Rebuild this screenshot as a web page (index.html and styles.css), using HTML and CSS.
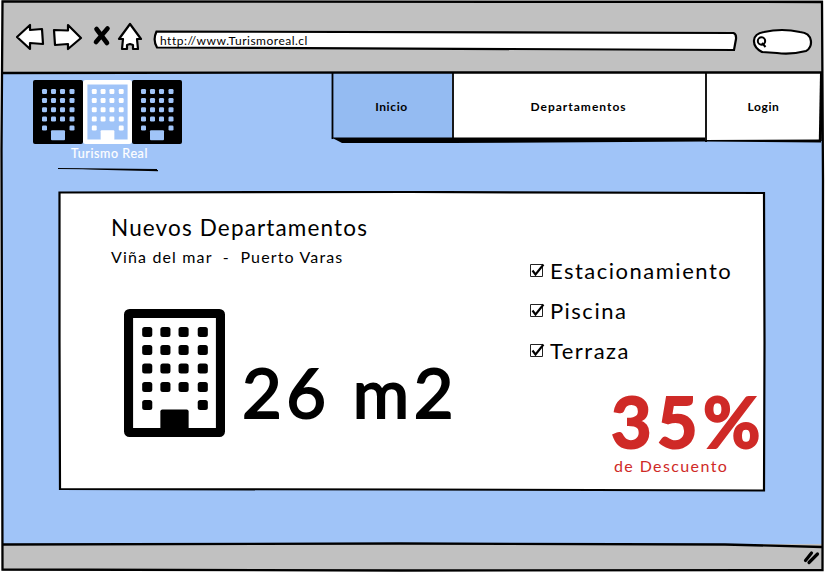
FILE: index.html
```
<!DOCTYPE html>
<html lang="es">
<head>
<meta charset="utf-8">
<title>Turismo Real</title>
<link rel="stylesheet" href="styles.css">
</head>
<body>
<svg class="symbols" aria-hidden="true">
  <symbol id="windows" viewBox="0 0 100 128">
    <g fill="currentColor">
      <rect x="18" y="18" width="10" height="10" rx="2.5"/><rect x="36" y="18" width="10" height="10" rx="2.5"/><rect x="54" y="18" width="10" height="10" rx="2.5"/><rect x="73" y="18" width="10" height="10" rx="2.5"/>
      <rect x="18" y="36" width="10" height="10" rx="2.5"/><rect x="36" y="36" width="10" height="10" rx="2.5"/><rect x="54" y="36" width="10" height="10" rx="2.5"/><rect x="73" y="36" width="10" height="10" rx="2.5"/>
      <rect x="18" y="54.500" width="10" height="10" rx="2.5"/><rect x="36" y="54.500" width="10" height="10" rx="2.5"/><rect x="54" y="54.500" width="10" height="10" rx="2.5"/><rect x="73" y="54.500" width="10" height="10" rx="2.5"/>
      <rect x="18" y="73" width="10" height="10" rx="2.5"/><rect x="36" y="73" width="10" height="10" rx="2.5"/><rect x="54" y="73" width="10" height="10" rx="2.5"/><rect x="73" y="73" width="10" height="10" rx="2.5"/>
      <rect x="18" y="91" width="10" height="10" rx="2.5"/><rect x="73" y="91" width="10" height="10" rx="2.5"/>
      <rect x="36" y="100.500" width="28" height="20" rx="2"/>
    </g>
  </symbol>
  <symbol id="building" viewBox="0 0 100 128">
    <rect x="4.500" y="4.500" width="91" height="119" rx="1" fill="none" stroke="currentColor" stroke-width="9" stroke-linejoin="round"/>
    <use href="#windows" width="100" height="128"/>
  </symbol>
  <symbol id="check" viewBox="0 0 16 16">
    <path d="M1.500 2.500h12v12h-12z" fill="#fff" stroke="#222" stroke-width="1"/>
    <path d="M3.500 8.500l3 4L14.500 2.500" fill="none" stroke="#000" stroke-width="2.100"/>
  </symbol>
</svg>

<div class="window">
  <header class="toolbar">
    <svg class="nav-icons" width="130" height="32" viewBox="0 0 130 32">
      <g fill="#fff" stroke="#000" stroke-width="2.200" stroke-linejoin="round">
        <path d="M1 17L14 5v5l12-1 1 15-13-1v6z"/>
        <path d="M38 10l14 .5V5l13 13-13 11v-5l-13 1z"/>
        <path d="M114 4l11 15h-4l1 10h-5v-4l-3-1-3 1v4h-5l1-10h-4z"/>
      </g>
      <path d="M80.500 9l10.500 14M91.500 8.500L80 22" stroke="#000" stroke-width="4.600" stroke-linecap="round"/>
    </svg>
    <div class="address">
      <svg class="outline" viewBox="0 0 586 24"><path d="M3.500 1.500l577 1.500q3 1 2.500 6l-2 11-577-2.500Q-.5 10 3.500 1.500z" fill="#fff" stroke="#000" stroke-width="2.200"/></svg>
      <span class="url">http://www.Turismoreal.cl</span>
    </div>
    <svg class="search" width="62" height="27" viewBox="0 0 62 27">
      <path d="M12 4Q30 0 48 4C62 5 61 20 54 23Q38 27 25 25L10 24C-1 18-1 6 12 4z" fill="#fff" stroke="#000" stroke-width="2.200"/>
      <circle cx="9.500" cy="13" r="3.700" fill="none" stroke="#000" stroke-width="2"/><path d="M10 15l3.500 4" stroke="#000" stroke-width="2"/>
    </svg>
  </header>

  <main class="page">
    <div class="masthead">
      <div class="brand">
        <div class="buildings">
          <svg class="block dark" viewBox="0 0 100 128" preserveAspectRatio="none"><use href="#windows" width="100" height="128"/></svg>
          <svg class="block light" viewBox="0 0 100 128" preserveAspectRatio="none"><use href="#building" width="100" height="128"/></svg>
          <svg class="block dark" viewBox="0 0 100 128" preserveAspectRatio="none"><use href="#windows" width="100" height="128"/></svg>
        </div>
        <span class="brand-name">Turismo Real</span>
        <svg class="rule" width="102" height="6" viewBox="0 0 102 6"><path d="M1 1.500L100 2.500" stroke="#000" stroke-width="1"/><path d="M1 1l20 1 60 0 20 1v1.200L50 3z"/></svg>
      </div>
      <nav class="menu">
        <a class="item active"><span>Inicio</span></a>
        <a class="item departments"><span>Departamentos</span></a>
        <a class="item"><span>Login</span></a>
        <svg class="menu-edge" width="492" height="76" viewBox="0 0 492 76">
          <path d="M.5 64.500H374V67L490 66.500V69.500L374 68.500 120 70H11Z"/>
          <path d="M1.500 0v66M122 0v66M375 0v69" fill="none" stroke="#000" stroke-width="1.800"/>
          <path d="M490.500 0l-1.200 68" stroke="#000" stroke-width="3"/>
        </svg>
      </nav>
    </div>

    <section class="card">
      <svg class="card-edge" viewBox="0 0 708 301"><path d="M1.500 1.500l350-.5 354.500 1 .5 150-.5 147.500-350-1L2 298 1.500 150z" fill="#fff" stroke="#000" stroke-width="2.200"/></svg>
      <div class="offer">
        <h1 class="title">Nuevos Departamentos</h1>
        <p class="places">Viña del mar&nbsp; -&nbsp; Puerto Varas</p>
        <div class="area">
          <svg class="building" width="101" height="128" viewBox="0 0 100 128" preserveAspectRatio="none"><use href="#building" width="100" height="128"/></svg>
          <span class="size">26 m2</span>
        </div>
      </div>
      <div class="details">
        <ul class="features">
          <li><svg width="17" height="16"><use href="#check" width="16" height="16"/></svg><span>Estacionamiento</span></li>
          <li><svg width="17" height="16"><use href="#check" width="16" height="16"/></svg><span>Piscina</span></li>
          <li><svg width="17" height="16"><use href="#check" width="16" height="16"/></svg><span>Terraza</span></li>
        </ul>
        <strong class="percent">35%</strong>
        <span class="discount">de Descuento</span>
      </div>
    </section>
  </main>

  <footer class="status">
    <svg width="17" height="15" viewBox="0 0 17 15"><path d="M2.500 10.500L8.500 3M6 12.500L14.500 4" stroke="#000" stroke-width="3.200" stroke-linecap="round"/></svg>
  </footer>

  <svg class="frame" viewBox="0 0 825 572">
    <path d="M2.500 1.500L822 2 823 180 822.500 570 400 570.500 2.500 569.500 1.500 150zM2 73L400 72.500 822 72.500M2 544.500L400 543.500 725 544.500 822 547" fill="none" stroke="#000" stroke-width="2.300"/>
  </svg>
</div>
</body>
</html>
```
FILE: styles.css
```
* { box-sizing: border-box; }
body { margin: 0; background: #fff; color: #000; font-family: Lato, "Open Sans", sans-serif; }
h1, p, ul { margin: 0; padding: 0; font-weight: 400; }
.symbols { position: absolute; width: 0; height: 0; }
.window { position: relative; display: flex; flex-direction: column; width: 825px; height: 572px; padding: 0 2px 1px; overflow: hidden; }
.frame { position: absolute; inset: 0; width: 825px; height: 572px; pointer-events: none; }

.toolbar { display: flex; align-items: flex-start; height: 73px; padding-left: 14px; background: #c1c1c1; }
.nav-icons { flex: none; margin-top: 20px; }
.address { position: relative; width: 586px; height: 24px; margin: 30px 0 0 7px; padding: 2px 0 0 7px; }
.outline { position: absolute; inset: 0; width: 586px; height: 24px; }
.url { position: relative; display: block; font-size: 12px; line-height: 17px; letter-spacing: .5px; white-space: nowrap; }
.search { flex: none; margin: 28px 0 0 13px; }

.page { flex: 1; background: #a0c4f8; }
.masthead { display: flex; justify-content: space-between; height: 118px; }
.brand { display: flex; flex-direction: column; width: 160px; padding: 7px 0 0 31px; }
.buildings { display: flex; width: 149px; height: 64px; }
.block { flex: none; width: 50px; height: 64px; }
.dark { color: #a0c4f8; background: #000; border-radius: 2px; }
.light { width: 49px; color: #fff; }
.brand-name { margin: 1px 0 0 38px; color: #fff; font-size: 12.500px; line-height: 17px; letter-spacing: .6px; white-space: nowrap; -webkit-text-stroke: .2px #fff; }
.rule { flex: none; margin: 5px 0 0 24px; }

.menu { position: relative; display: grid; grid-template-columns: 121px 253px 117px; width: 491px; height: 67px; margin-right: 1px; }
.item { display: flex; align-items: center; justify-content: center; background: #fff; font-size: 12px; font-weight: 700; letter-spacing: .6px; }
.departments { letter-spacing: 1px; }
.active { background: #94bbf2; }
.menu-edge { position: absolute; left: 0; top: 0; }

.card { position: relative; display: flex; width: 708px; height: 301px; margin-left: 56px; }
.card-edge { position: absolute; inset: 0; width: 708px; height: 301px; }
.offer { position: relative; width: 472px; padding: 23px 0 0 53px; }
.title { font-size: 22.500px; line-height: 28px; letter-spacing: 1.150px; white-space: nowrap; }
.places { padding-top: 4px; font-size: 16px; line-height: 22px; letter-spacing: 1.150px; white-space: nowrap; }
.area { display: flex; margin: 41px 0 0 13px; }
.building { flex: none; }
.size { margin: 41px 0 0 17px; font-size: 68.500px; line-height: 84px; letter-spacing: 4.600px; -webkit-text-stroke: 2px #000; white-space: nowrap; }

.details { position: relative; padding-top: 59px; }
.features { list-style: none; }
.features li { display: flex; align-items: center; height: 40px; font-size: 22px; letter-spacing: 1.500px; white-space: nowrap; }
.features span { margin-left: 4px; }
.percent { display: block; height: 72px; margin: 13px 0 0 82px; color: #cf2a27; font-size: 70px; line-height: 76px; letter-spacing: 5.500px; -webkit-text-stroke: 2px #cf2a27; }
.discount { display: block; margin: 0 0 0 85px; color: #cf2a27; font-size: 16px; line-height: 22px; letter-spacing: 1.400px; white-space: nowrap; }

.status { display: flex; justify-content: flex-end; align-items: center; height: 27px; padding-right: 3px; background: #c1c1c1; }
```
